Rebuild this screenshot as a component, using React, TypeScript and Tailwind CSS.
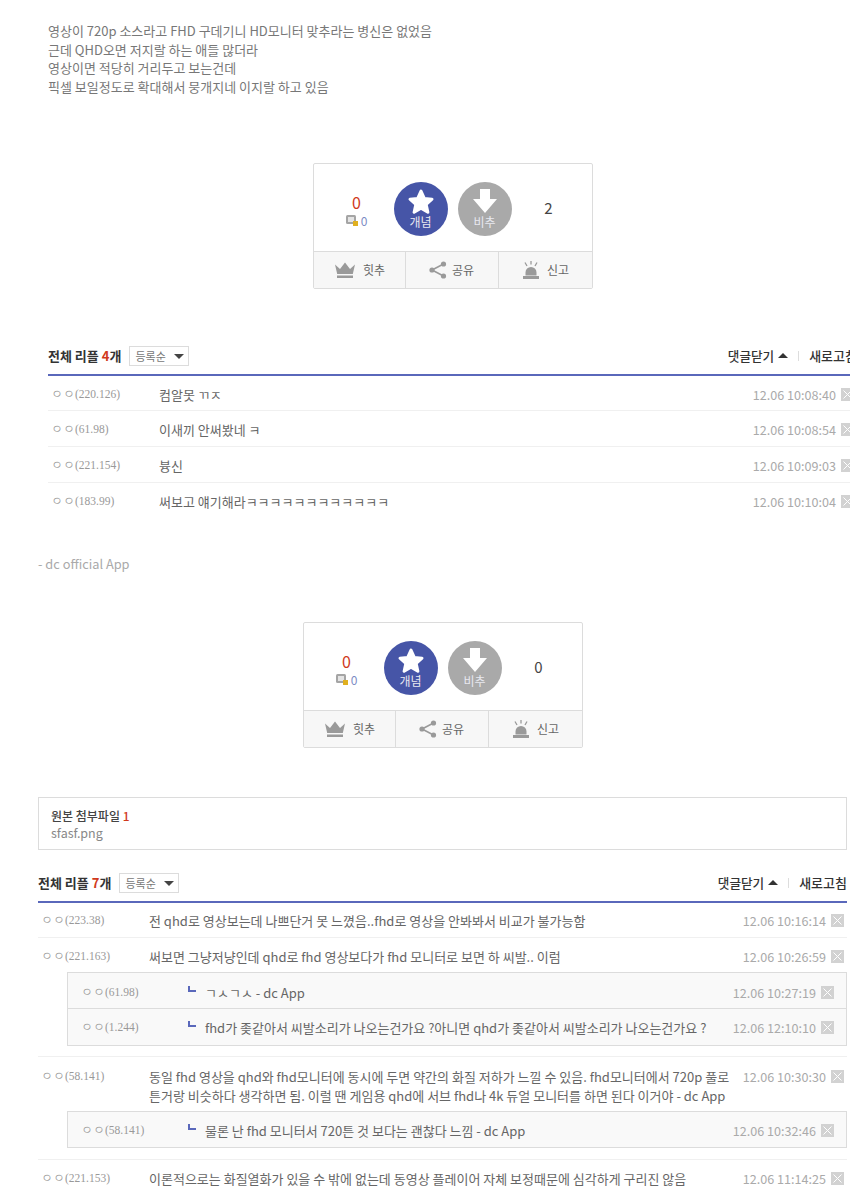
import { ReactNode } from 'react';

const serif = 'font-["Liberation_Serif",serif]';

const firstReplies = [
  { ip: '(220.126)', text: '컴알못 ㄲㅈ', date: '12.06 10:08:40' },
  { ip: '(61.98)', text: '이새끼 안써봤네 ㅋ', date: '12.06 10:08:54' },
  { ip: '(221.154)', text: '븅신', date: '12.06 10:09:03' },
  { ip: '(183.99)', text: '써보고 얘기해라ㅋㅋㅋㅋㅋㅋㅋㅋㅋㅋㅋㅋ', date: '12.06 10:10:04' },
];

function CrownIcon() {
  return (
    <svg width="24" height="18" viewBox="0 0 24 18" fill="#9a9a9a">
      <path d="M2 3.5 7 8l5-6.5L17 8l5-4.5-2.2 9.5H4.2z" />
      <rect x="4" y="14.5" width="16" height="2.5" />
    </svg>
  );
}

function ShareIcon() {
  return (
    <svg width="18" height="18" viewBox="0 0 18 18" fill="#9a9a9a" stroke="#9a9a9a">
      <circle cx="14.5" cy="3" r="2.6" stroke="none" />
      <circle cx="3" cy="9" r="2.6" stroke="none" />
      <circle cx="14.5" cy="15" r="2.6" stroke="none" />
      <path d="M14.5 3 3 9l11.5 6" fill="none" strokeWidth="1.6" />
    </svg>
  );
}

function SirenIcon() {
  return (
    <svg width="20" height="20" viewBox="0 0 20 20" fill="#9a9a9a" stroke="#9a9a9a">
      <path d="M4.5 15.5V12.5a5.5 5.5 0 0 1 11 0v3z" stroke="none" />
      <rect x="2" y="16" width="16" height="3" stroke="none" />
      <path d="M10 1v3.5M4 2.5l2 3.5M16 2.5l-2 3.5" fill="none" strokeWidth="1.3" />
    </svg>
  );
}

function VoteCircle({ color, label, children }: { color: string; label: string; children: ReactNode }) {
  return (
    <div className={`w-[54px] h-[54px] rounded-full flex flex-col items-center ${color}`}>
      <div className="mt-[6px] h-[27px]">{children}</div>
      <span className="text-[12px] leading-[14px] text-[#e8e8f0]">{label}</span>
    </div>
  );
}

function VoteBox({ down }: { down: string }) {
  return (
    <div className="w-[280px] mx-auto border border-[#dcdcdc] rounded-[2px] bg-white">
      <div className="h-[87px] pt-[2px] flex items-center justify-center">
        <div className="w-[74px] mt-[3px] flex flex-col items-center">
          <span className="text-[16px] leading-[20px] text-[#d0391c]">0</span>
          <span className="mt-[1px] flex items-center gap-[3px] text-[12px] leading-[16px] text-[#7d8cc4]">
            <svg width="12" height="11" viewBox="0 0 12 11">
              <rect x="0" y="0" width="10" height="9" rx="1.5" fill="#a5a5a5" />
              <rect x="2" y="2" width="6" height="5" fill="#e4e4e4" />
              <rect x="7" y="6" width="5" height="5" fill="#e0b020" />
            </svg>
            0
          </span>
        </div>
        <div className="flex gap-[10px]">
          <VoteCircle color="bg-[#4655a7]" label="개념">
            <svg width="28" height="27" viewBox="0 0 28 27" fill="white" stroke="white" strokeLinejoin="round" strokeWidth="3">
              <path d="M14 3l3.3 7.4 7.7.8-5.8 5.3 1.7 7.8L14 20.2l-6.9 4.1 1.7-7.8L3 11.2l7.7-.8z" />
            </svg>
          </VoteCircle>
          <VoteCircle color="bg-[#a9a9a9]" label="비추">
            <svg width="26" height="26" viewBox="0 0 26 26" fill="white">
              <path d="M8 1h10v10h7L13 25 1 11h7z" />
            </svg>
          </VoteCircle>
        </div>
        <div className="w-[74px] text-center text-[15px] text-[#444]">{down}</div>
      </div>
      <div className="h-[37px] flex border-t border-[#dcdcdc] bg-[#f7f7f7] text-[12px] text-[#666]">
        <div className="w-[92px] border-r border-[#dcdcdc] flex items-center justify-center gap-[6px]">
          <CrownIcon />
          <span>힛추</span>
        </div>
        <div className="w-[93px] border-r border-[#dcdcdc] flex items-center justify-center gap-[5px]">
          <ShareIcon />
          <span>공유</span>
        </div>
        <div className="flex-1 flex items-center justify-center gap-[6px]">
          <SirenIcon />
          <span>신고</span>
        </div>
      </div>
    </div>
  );
}

function ReplyHeader({ count }: { count: string }) {
  return (
    <div className="h-[35px] flex items-center border-b-2 border-[#5a68bb] pb-[3px]">
      <span className="text-[13px] font-bold text-[#333]">
        전체 리플 <span className="text-[#d0391c]">{count}</span>개
      </span>
      <span className="ml-[8px] w-[60px] h-[20px] border border-[#dcdcdc] flex items-center pl-[5px] text-[11px] text-[#777]">
        등록순
        <span className="ml-[8px] border-x-[5px] border-x-transparent border-t-[5px] border-t-[#444]" />
      </span>
      <span className="ml-auto text-[12.6px] font-medium text-[#333] flex items-center gap-[4px]">
        댓글닫기
        <span className="border-x-[5px] border-x-transparent border-b-[5px] border-b-[#333]" />
      </span>
      <span className="mx-[10px] w-px h-[10px] bg-[#ddd]" />
      <span className="text-[13px] font-medium text-[#333] whitespace-nowrap">새로고침</span>
    </div>
  );
}

function CloseBox() {
  return (
    <span className="w-[13px] h-[13px] bg-[#d2d2d2] flex items-center justify-center shrink-0">
      <svg width="11" height="11" viewBox="0 0 11 11" stroke="white" strokeWidth="1">
        <path d="M1.5 1.5l8 8M9.5 1.5l-8 8" />
      </svg>
    </span>
  );
}

function Reply({
  ip,
  text,
  date,
  pad,
  nested,
  line = true,
}: {
  ip: string;
  text: ReactNode;
  date: string;
  pad: string;
  nested?: boolean;
  line?: boolean;
}) {
  return (
    <div
      className={`flex items-start ${pad} ${nested ? 'pl-[13px] pr-[12px]' : 'pl-[3px] pr-[3px]'} ${
        line ? (nested ? 'border-b border-[#dcdcdc]' : 'border-b border-[#f0f0f0]') : ''
      }`}
    >
      <span className={`w-[108px] shrink-0 leading-[19px] text-[11.5px] text-[#999] ${serif}`}>ㅇㅇ{ip}</span>
      <div className={`flex-1 min-w-0 text-[13px] leading-[19px] text-[#666] ${nested ? 'flex -ml-px' : ''}`}>
        {nested && <span className="w-[8px] h-[6px] mr-[9px] mt-[3px] shrink-0 border-l-2 border-b-2 border-[#5a68bb]" />}
        <div>{text}</div>
      </div>
      <span className="ml-[8px] text-[12.6px] leading-[19px] text-[#aaa] whitespace-nowrap">{date}</span>
      <span className="ml-[5px] mt-[3px]">
        <CloseBox />
      </span>
    </div>
  );
}

export default function App() {
  return (
    <div className="w-[850px] h-[1196px] overflow-hidden bg-white font-['Noto_Sans_CJK_KR','Noto_Sans',sans-serif]">
      <div className="w-[809px] ml-[48px] pt-[22px]">
        <div className="text-[13px] leading-[18.7px] text-[#777] h-[75px]">
          <p>영상이 720p 소스라고 FHD 구데기니 HD모니터 맞추라는 병신은 없었음</p>
          <p>근데 QHD오면 저지랄 하는 애들 많더라</p>
          <p>영상이면 적당히 거리두고 보는건데</p>
          <p>픽셀 보일정도로 확대해서 뭉개지네 이지랄 하고 있음</p>
        </div>
        <div className="mt-[66px]">
          <VoteBox down="2" />
        </div>
        <div className="mt-[52px]">
          <ReplyHeader count="4" />
          {firstReplies.map((r, i) => (
            <Reply
              key={i}
              ip={r.ip}
              text={r.text}
              date={r.date}
              pad={i === 0 ? 'pt-[9px] pb-[6px]' : 'pt-[9px] pb-[7px]'}
              line={i !== 3}
            />
          ))}
        </div>
      </div>

      <div className="w-[809px] ml-[38px]">
        <p className="mt-[37px] text-[12.8px] leading-[18px] text-[#aaa]">- dc official App</p>
        <div className="mt-[49px]">
          <VoteBox down="0" />
        </div>
        <div className="mt-[49px] h-[53px] border border-[#dcdcdc] pl-[12px] pt-[10px]">
          <p className="text-[12px] leading-[16px] font-medium text-[#444]">
            원본 첨부파일 <span className="text-[#d0391c]">1</span>
          </p>
          <p className="text-[12.5px] leading-[18px] text-[#888]">sfasf.png</p>
        </div>
        <div className="mt-[18px]">
          <ReplyHeader count="7" />
          <Reply
            ip="(223.38)"
            pad="pt-[8px] pb-[7px]"
            text="전 qhd로 영상보는데 나쁘단거 못 느꼈음..fhd로 영상을 안봐봐서 비교가 불가능함"
            date="12.06 10:16:14"
          />
          <Reply
            ip="(221.163)"
            pad="pt-[9px] pb-[6px]"
            line={false}
            text="써보면 그냥저냥인데 qhd로 fhd 영상보다가 fhd 모니터로 보면 하 씨발.. 이럼"
            date="12.06 10:26:59"
          />
          <div className="ml-[29px] border border-[#dcdcdc] bg-[#f9f9f9]">
            <Reply nested pad="pt-[10px] pb-[6px]" ip="(61.98)" text="ㄱㅅㄱㅅ - dc App" date="12.06 10:27:19" />
            <Reply
              nested
              line={false}
              pad="pt-[9px] pb-[8px]"
              ip="(1.244)"
              text="fhd가 좆같아서 씨발소리가 나오는건가요 ?아니면 qhd가 좆같아서 씨발소리가 나오는건가요 ?"
              date="12.06 12:10:10"
            />
          </div>
          <div className="mt-[10px] border-t border-[#f0f0f0]">
            <Reply
              line={false}
              pad="pt-[10px] pb-[6px]"
              ip="(58.141)"
              text="동일 fhd 영상을 qhd와 fhd모니터에 동시에 두면 약간의 화질 저하가 느낄 수 있음. fhd모니터에서 720p 풀로 튼거랑 비슷하다 생각하면 됨. 이럴 땐 게임용 qhd에 서브 fhd나 4k 듀얼 모니터를 하면 된다 이거야 - dc App"
              date="12.06 10:30:30"
            />
          </div>
          <div className="ml-[29px] border border-[#dcdcdc] bg-[#f9f9f9]">
            <Reply
              nested
              line={false}
              pad="pt-[9px] pb-[7px]"
              ip="(58.141)"
              text="물론 난 fhd 모니터서 720튼 것 보다는 괜찮다 느낌 - dc App"
              date="12.06 10:32:46"
            />
          </div>
          <div className="mt-[11px] border-t border-[#f0f0f0]">
            <Reply
              line={false}
              pad="pt-[9px] pb-[6px]"
              ip="(221.153)"
              text="이론적으로는 화질열화가 있을 수 밖에 없는데 동영상 플레이어 자체 보정때문에 심각하게 구리진 않음"
              date="12.06 11:14:25"
            />
          </div>
        </div>
      </div>
    </div>
  );
}
